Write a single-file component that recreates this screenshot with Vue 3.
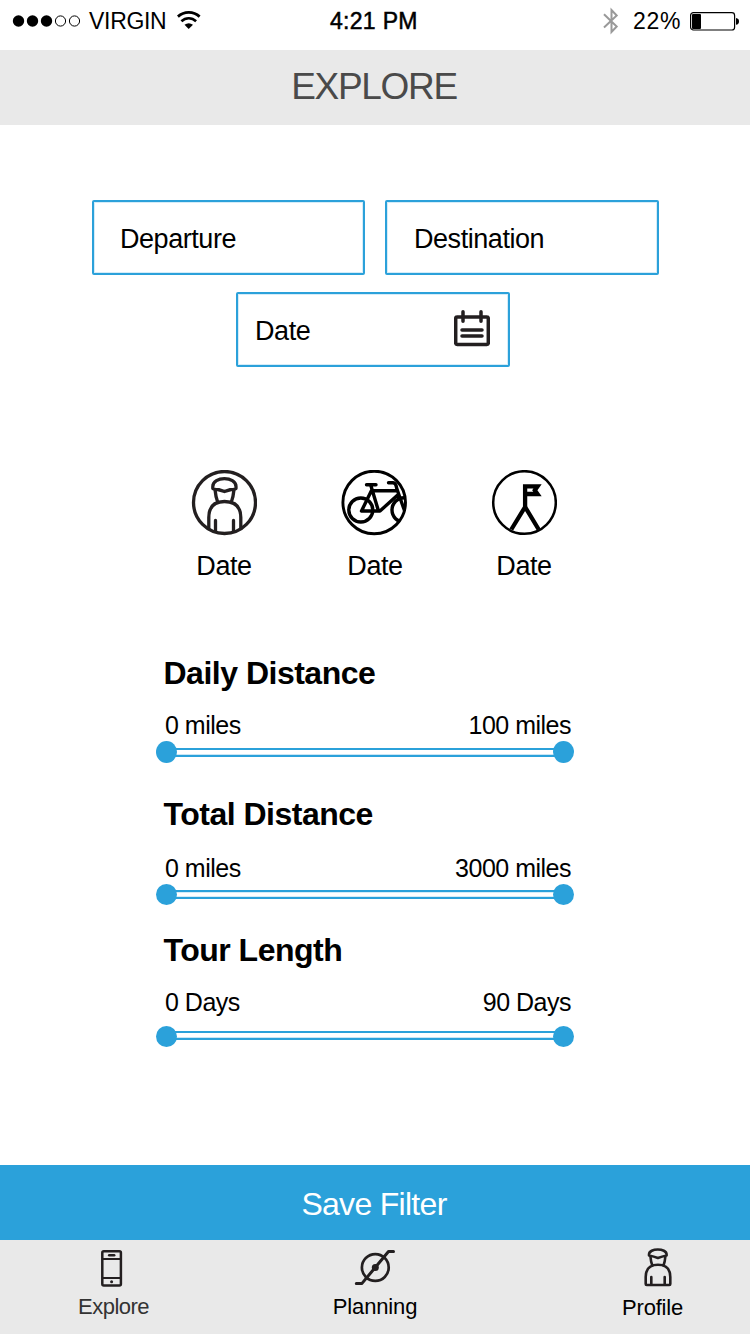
<script setup>
const sliders = [
  { title: 'Daily Distance', min: '0 miles', max: '100 miles', cls: 'daily' },
  { title: 'Total Distance', min: '0 miles', max: '3000 miles', cls: 'total' },
  { title: 'Tour Length', min: '0 Days', max: '90 Days', cls: 'tour' },
]
</script>

<template>
  <main class="screen">
    <div class="status">
      <div class="carrier">
        <svg class="signal" width="69" height="14" viewBox="0 0 69 14">
          <circle cx="6.5" cy="7" r="5.7" />
          <circle cx="20.5" cy="7" r="5.7" />
          <circle cx="34.5" cy="7" r="5.7" />
          <g fill="none" stroke="#000" stroke-width="1">
            <circle cx="48.5" cy="7" r="5.1" />
            <circle cx="62.5" cy="7" r="5.1" />
          </g>
        </svg>
        <span class="operator">VIRGIN</span>
        <svg class="wifi" width="24" height="20" viewBox="0 0 24 20">
          <g fill="none" stroke="#000">
            <path d="M0.9 6.6C7 1 16.5 1 22.6 6.6" stroke-width="2.8" />
            <path d="M4.4 11.3C8.7 7.3 14.8 7.3 19.1 11.3" stroke-width="2.6" />
          </g>
          <path d="M7.5 14.7Q11.7 11.7 16 14.7L11.7 19Z" />
        </svg>
      </div>
      <span class="clock">4:21 PM</span>
      <div class="power">
        <svg class="bluetooth" width="16" height="28" viewBox="0 0 16 28">
          <path d="M1 7.2L13.7 19.5L8.5 25V3L13.7 8.5L1 20.5" fill="none" stroke="#999" stroke-width="2" />
        </svg>
        <span class="percent">22%</span>
        <svg class="battery" width="50" height="20" viewBox="0 0 50 20">
          <rect x=".6" y="1.6" width="44" height="17.4" rx="2.8" fill="none" stroke="#000" stroke-width="1.2" />
          <rect x="2" y="3" width="9" height="15" rx="1" />
          <path d="M46 7Q49 7.5 49 10.4Q49 13.3 46 13.8Z" />
        </svg>
      </div>
    </div>

    <header class="header"><h1>EXPLORE</h1></header>

    <section class="fields">
      <div class="row">
        <div class="field departure"><span>Departure</span></div>
        <div class="field destination"><span>Destination</span></div>
      </div>
      <div class="field date">
        <span>Date</span>
        <svg width="36" height="37" viewBox="0 0 36 37" fill="none" stroke="#231f20" stroke-width="3.5" stroke-linecap="round">
          <rect x="1.7" y="7" width="32.6" height="27.5" rx="1.5" />
          <path d="M9 1.8V11.2M27 1.8V11.2M8 20H28M8 26H28" />
        </svg>
      </div>
    </section>

    <section class="options">
      <div class="option">
        <svg width="66" height="66" viewBox="-.5 .5 66 66" fill="none" stroke="#231f20" stroke-width="3.3" stroke-linecap="round" stroke-linejoin="round">
          <circle cx="33" cy="33" r="31" />
          <path d="M21.3 17C21.3 6.5 44.5 6.5 44.5 17V19Q38.5 20 33 22Q27.5 20 21.3 19Z" />
          <path d="M23.5 20C24 25 24.5 28 26 32M42.5 20C42 25 41.5 28 40 32" />
          <path d="M17.3 59V48C17.3 37 23 32 33 32S49.3 37 49.3 48V59M24 51V61.5M42 51V61.5" />
        </svg>
        <span>Date</span>
      </div>
      <div class="option">
        <svg width="68" height="66" viewBox="0 .5 68 66" fill="none" stroke="#000" stroke-width="3.4">
          <defs>
            <clipPath id="wheel-clip"><circle cx="34.2" cy="33" r="32" /></clipPath>
          </defs>
          <circle cx="34.2" cy="33" r="31.3" stroke-width="2.9" />
          <g clip-path="url(#wheel-clip)">
            <circle cx="20.8" cy="40.5" r="12" />
            <circle cx="64.3" cy="40.5" r="12.3" />
          </g>
          <path d="M21.5 41.5H40L57.7 25.5M21.5 41.5L32 20M30.7 15.5L38.5 41.5M33 21.2H57M26.5 15.3H36M48.5 13.2H53Q56 13.5 56.7 18.8L59 25.5L64.3 40.5" stroke-linecap="round" stroke-linejoin="round" />
        </svg>
        <span class="nudged">Date</span>
      </div>
      <div class="option">
        <svg width="66" height="66" viewBox="-.5 .5 66 66" fill="none" stroke="#000">
          <circle cx="33" cy="33" r="31.3" stroke-width="2.5" />
          <path d="M33.6 38V16.9H46L43.3 20.7L46 24.5H33.6" stroke-width="4.3" />
          <path d="M19.8 60L33.6 37.5L47.2 60" stroke-width="4.3" stroke-linejoin="round" />
        </svg>
        <span>Date</span>
      </div>
    </section>

    <section class="sliders">
      <div v-for="s in sliders" :key="s.title" class="slider" :class="s.cls">
        <h2>{{ s.title }}</h2>
        <div class="range"><span>{{ s.min }}</span><span>{{ s.max }}</span></div>
        <div class="track"><i class="knob"></i><i class="bar"></i><i class="knob"></i></div>
      </div>
    </section>

    <button class="save">Save Filter</button>

    <nav class="tabs">
      <div class="tab explore">
        <svg width="22" height="38" viewBox="0 0 22 38" fill="none" stroke="#231f20" stroke-width="2.5">
          <rect x="1.3" y="2.3" width="18.6" height="34.3" rx="1.5" />
          <path d="M1 10H20.500M1 29H20.500" stroke-width="2.2" />
          <path d="M8.200 6.200H13.200" stroke-linecap="round" />
          <circle cx="10.600" cy="32.700" r="1.500" fill="#231f20" stroke="none" />
        </svg>
        <span>Explore</span>
      </div>
      <div class="tab planning">
        <svg width="42" height="38" viewBox="0 0 42 38" fill="none" stroke="#231f20" stroke-linecap="round" stroke-linejoin="round">
          <circle cx="21.3" cy="18.5" r="13.4" stroke-width="2.7" />
          <circle cx="21.3" cy="18.5" r="3.5" fill="#231f20" stroke="none" />
          <path d="M2.3 34.4H8L34.5 2.5H39.500" stroke-width="3" />
        </svg>
        <span>Planning</span>
      </div>
      <div class="tab profile">
        <svg width="28" height="39" viewBox="0 0 28 39" fill="none" stroke="#231f20" stroke-width="2.6" stroke-linecap="round" stroke-linejoin="round">
          <path d="M5 6.500C5 -.2 22.600 -.2 22.600 6.500V7.500Q18 8.500 13.900 10Q10 8.500 5 7.500Z" />
          <path d="M6.500 9C6.800 13 7.200 14.500 8.300 17.500M21.300 9C21 13 20.600 14.500 19.500 17.500" />
          <path d="M1.700 36V29C1.700 21 6 16.800 14 16.800S26.300 21 26.300 29V36Q26.300 37 25.300 37H2.700Q1.700 37 1.700 36ZM7.300 29V36.500M20.700 29V36.500" />
        </svg>
        <span>Profile</span>
      </div>
    </nav>
  </main>
</template>

<style>
body { background: #fff; }
</style>

<style scoped>
* { box-sizing: border-box; }
.screen {
  width: 750px;
  height: 1334px;
  display: flex;
  flex-direction: column;
  overflow: hidden;
  background: #fff;
  color: #000;
  font-family: "Liberation Sans", Arial, sans-serif;
}
svg { display: block; flex: none; }
span { white-space: nowrap; }

.status {
  height: 50px;
  padding: 0 11px 8px 12px;
  display: grid;
  grid-template-columns: 318px 1fr 136px;
  align-items: center;
  font-size: 23px;
  line-height: 26px;
}
.carrier, .power { display: flex; align-items: center; }
.operator { margin-left: 8px; letter-spacing: -.3px; }
.wifi { margin-left: 11px; margin-top: -2px; }
.clock { letter-spacing: .3px; -webkit-text-stroke: .5px #000; }
.bluetooth { margin-right: 14px; }
.percent { letter-spacing: .7px; }
.battery { margin-left: 9px; margin-top: -1px; }

.header {
  height: 75px;
  background: #e9e9e9;
  display: flex;
  justify-content: center;
}
h1 {
  margin: 0 2px 0 0;
  font-size: 37px;
  line-height: 74px;
  font-weight: 400;
  letter-spacing: -1.3px;
  color: #4a4a4a;
}

.fields {
  height: 345px;
  padding: 75px 91px 0 92px;
  display: flex;
  flex-direction: column;
  gap: 17px;
}
.row { display: flex; gap: 20px; }
.field {
  height: 75px;
  border: 2px solid #2ba1da;
  border-radius: 2px;
  box-shadow: inset 0 0 0 1px #d5ecf8;
  display: flex;
  align-items: center;
  font-size: 27px;
  letter-spacing: -.45px;
  padding-top: 3px;
}
.departure { width: 273px; padding-left: 26px; }
.destination { width: 274px; padding-left: 27px; }
.date {
  width: 274px;
  margin-left: 144px;
  padding-left: 17px;
  padding-right: 18px;
  justify-content: space-between;
  letter-spacing: -.4px;
}
.date svg { margin-top: -5px; }

.options {
  height: 180px;
  padding-left: 149px;
  display: flex;
}
.option {
  width: 150px;
  display: flex;
  flex-direction: column;
  align-items: center;
  font-size: 27px;
  line-height: 32px;
  letter-spacing: -.4px;
}
.option span { margin-top: 14px; }
.option .nudged { padding-left: 2px; }

.sliders { height: 515px; padding-left: 156px; }
.slider { width: 418px; height: 143px; }
.total { height: 142px; }
h2 {
  margin: 0;
  padding-left: 7.5px;
  font-size: 32px;
  line-height: 36px;
  letter-spacing: -.5px;
  padding-top: 5px;
}
.range {
  display: flex;
  justify-content: space-between;
  padding: 19px 3px 0 9px;
  font-size: 25px;
  line-height: 30px;
  letter-spacing: -.5px;
}
.track {
  height: 22px;
  margin-top: 1px;
  display: flex;
  align-items: flex-start;
}
.total h2 { padding-top: 3px; }
.total .range { padding-top: 21px; }
.tour h2 { padding-top: 0; margin-top: -3px; }
.tour .range { padding-top: 19px; }
.tour .track { margin-top: 9px; }
.knob {
  position: relative;
  z-index: 1;
  width: 21px;
  height: 21px;
  border-radius: 50%;
  background: #2ba1da;
}
.daily .knob { height: 22px; }
.bar {
  flex: 1;
  height: 9px;
  margin: 7px -2px 0;
  border: solid #2ba1da;
  border-width: 2px 0;
  box-shadow: inset 0 -1px #c9e6f5;
}
.total .bar { margin-top: 6px; box-shadow: inset 0 1px #d5ecf8, inset 0 -1px #d5ecf8; }
.tour .bar { margin-top: 5px; }

.save {
  height: 75px;
  border: 0;
  padding: 4px 2px 0 0;
  background: #2ba1da;
  color: #fff;
  font-family: inherit;
  font-size: 32px;
  letter-spacing: -.7px;
}
.tabs {
  height: 94px;
  background: #e9e9e9;
  display: flex;
  justify-content: space-between;
  padding: 9px 67px 0 78px;
}
.tab {
  display: flex;
  flex-direction: column;
  align-items: center;
  font-size: 22px;
  line-height: 26px;
}
.tab span { margin-top: 7px; }
.explore { color: #333; letter-spacing: -.5px; }
.explore svg { margin-left: -4px; }
.planning { margin-right: 21px; letter-spacing: -.15px; }
.profile { letter-spacing: -.2px; }
.profile svg { margin-left: 11px; margin-top: -1px; margin-bottom: 1px; }
</style>
